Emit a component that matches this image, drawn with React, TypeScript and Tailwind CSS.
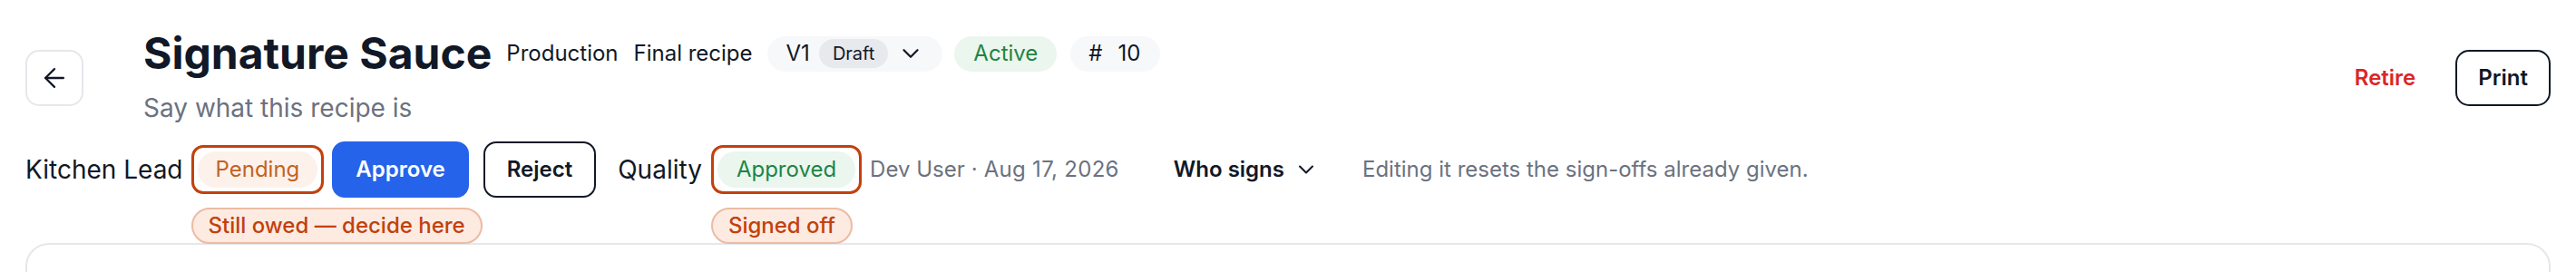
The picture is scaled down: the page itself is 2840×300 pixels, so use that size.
import React from "react";
import { ArrowLeft, ChevronDown } from "lucide-react";

function StatusBox({
  label,
  pillClass,
  chip,
}: {
  label: string;
  pillClass: string;
  chip: string;
}) {
  return (
    <div className="relative">
      <div className="rounded-[13px] border-[3px] border-[#c2410c] p-[4px]">
        <div
          className={`flex h-[40px] items-center rounded-full px-5 text-[24px] leading-none ${pillClass}`}
        >
          {label}
        </div>
      </div>
      <div className="absolute left-0 top-[69px] z-10 flex h-[40px] items-center whitespace-nowrap rounded-full border-2 border-[#ecbba3] bg-[#fdebe2] px-[17px] text-[24px] font-medium leading-none text-[#c2410c]">
        {chip}
      </div>
    </div>
  );
}

export default function App() {
  return (
    <div
      className="min-h-[300px] bg-white px-7 text-[#111827]"
      style={{ fontFamily: "Inter, 'Noto Sans', sans-serif" }}
    >
      {/* Header */}
      <div className="flex items-center justify-between pt-[35px]">
        <div className="flex items-center gap-[66px]">
          <button className="flex h-[62px] w-16 items-center justify-center rounded-[15px] border-2 border-[#e5e7eb] bg-white text-[#111827]">
            <ArrowLeft size={34} strokeWidth={1.6} />
          </button>
          <div className="flex flex-col">
            <div className="flex items-center gap-[15px]">
              <h1 className="text-[48px] font-bold leading-none">
                Signature Sauce
              </h1>
              <span className="ml-[1px] text-[24px] leading-none">Production</span>
              <span className="ml-[2px] text-[24px] leading-none">Final recipe</span>
              <div className="ml-[1px] flex h-[39px] items-center gap-[10px] rounded-full bg-[#f7f8fa] pl-[21px] pr-[20px]">
                <span className="text-[24px] leading-none">V1</span>
                <span className="flex h-8 items-center rounded-full bg-[#e8e9ed] px-[15px] text-[20px] leading-none">
                  Draft
                </span>
                <ChevronDown size={30} strokeWidth={1.8} />
              </div>
              <div className="ml-[-2px] flex h-[39px] items-center rounded-full bg-[#ebf6ee] px-[21px] text-[24px] leading-none text-[#1e8544]">
                Active
              </div>
              <div className="flex h-[39px] items-center gap-[17px] rounded-full bg-[#f7f8fa] pl-[20px] pr-[22px] text-[24px] leading-none">
                <span>#</span>
                <span>10</span>
              </div>
            </div>
            <div className="mt-[19px] text-[28px] leading-[34px] text-[#6b7280]">
              Say what this recipe is
            </div>
          </div>
        </div>
        <div className="flex items-center gap-[20px]">
          <button className="px-6 text-[24px] font-semibold leading-none text-[#dc2626]">
            Retire
          </button>
          <button className="flex h-[62px] items-center rounded-[15px] border-2 border-[#111827] px-[23px] text-[24px] font-semibold leading-none text-[#111827]">
            Print
          </button>
        </div>
      </div>

      {/* Sign-off row */}
      <div className="mt-5 flex items-center">
        <span className="text-[28px] leading-none">Kitchen Lead</span>
        <div className="ml-[9px]">
          <StatusBox
            label="Pending"
            pillClass="bg-[#fcf1eb] text-[#c4621f]"
            chip="Still owed — decide here"
          />
        </div>
        <button className="ml-[9px] flex h-[62px] items-center rounded-[14px] border-2 border-[#2563eb] bg-[#2563eb] px-6 text-[24px] font-semibold leading-none text-white">
          Approve
        </button>
        <button className="ml-4 flex h-[62px] items-center rounded-[14px] border-2 border-[#111827] bg-white px-6 text-[24px] font-semibold leading-none text-[#111827]">
          Reject
        </button>
        <span className="ml-6 text-[28px] leading-none">Quality</span>
        <div className="ml-[10px]">
          <StatusBox
            label="Approved"
            pillClass="bg-[#ebf6ee] text-[#1e8544] px-[21px]"
            chip="Signed off"
          />
        </div>
        <span className="ml-[9px] flex items-center text-[24px] leading-none text-[#6b7280]">
          <span>Dev User</span>
          <span className="mx-[7px]">·</span>
          <span className="tracking-[0.3px]">Aug 17, 2026</span>
        </span>
        <button className="ml-[60px] flex items-center gap-[10px] text-[24px] font-semibold leading-none text-[#111827]">
          Who signs
          <ChevronDown size={28} strokeWidth={1.8} />
        </button>
        <span className="ml-[48px] text-[24px] leading-none text-[#6b7280]">
          Editing it resets the sign-offs already given.
        </span>
      </div>

      {/* Card */}
      <div className="mt-[50px] h-[200px] rounded-[26px] border-2 border-[#e5e7eb] bg-white" />
    </div>
  );
}
